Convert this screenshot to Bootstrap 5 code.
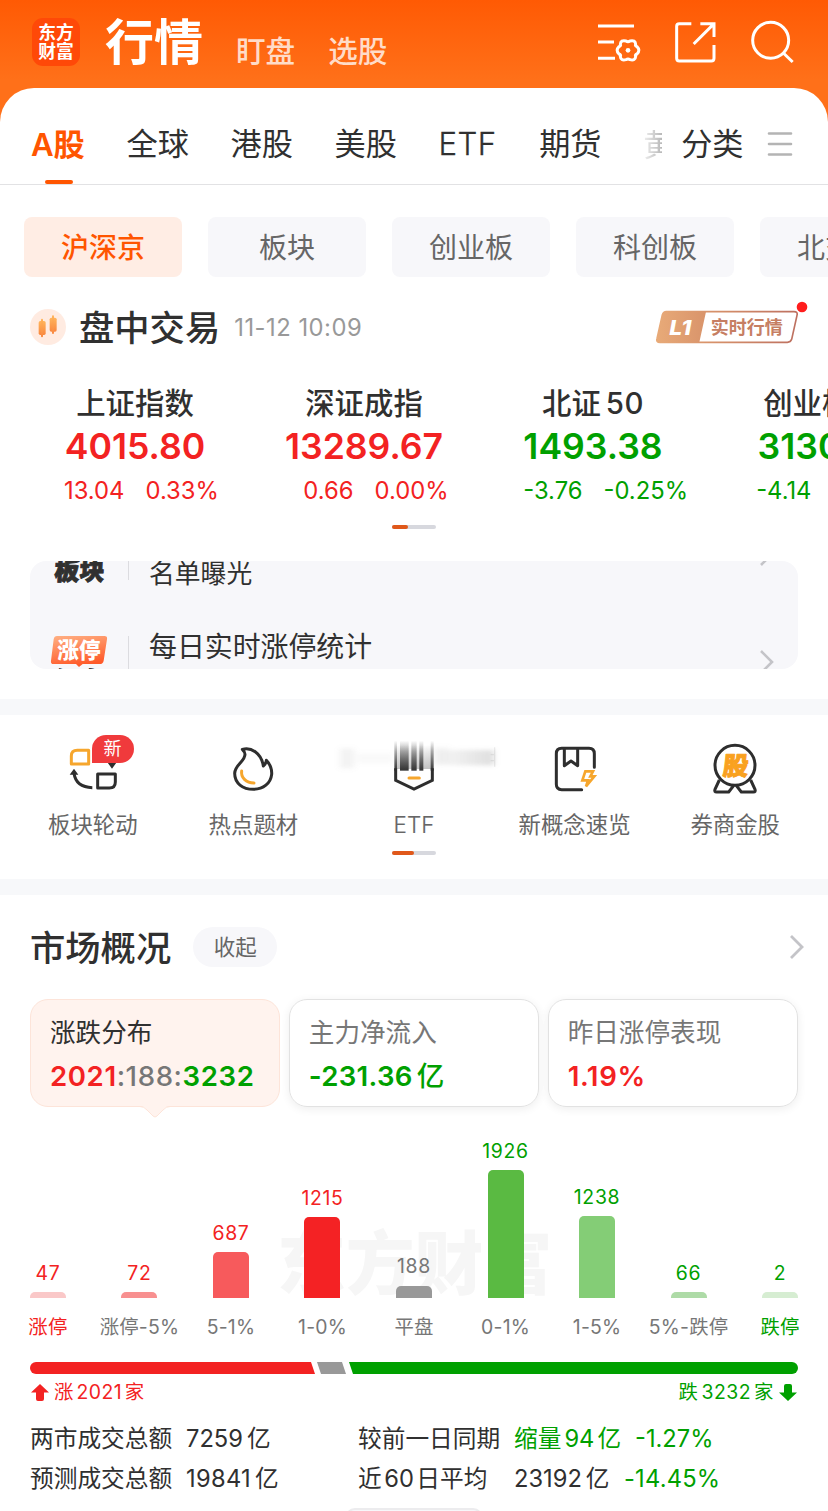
<!DOCTYPE html>
<html lang="zh-CN">
<head>
<meta charset="utf-8">
<meta name="viewport" content="width=device-width, initial-scale=1">
<title>行情</title>
<link href="https://cdn.jsdelivr.net/npm/bootstrap@5.3.0/dist/css/bootstrap.min.css" rel="stylesheet">
<style>
  :root { --up:#f32222; --down:#00a000; --brand:#ff5500; --ink:#303030; --muted2:#666; --soft:#f7f7fa; }
  html, body { height:1511px; overflow:hidden; }
  body { font-family:Inter,"Noto Sans CJK SC",sans-serif; color:var(--ink); background:#fff; line-height:1; white-space:nowrap; }
  svg { display:block; flex:none; overflow:visible; }
  .up { color:var(--up); } .down { color:var(--down); }
  .top-area { height:128px; background:linear-gradient(#ff5a04,#ff7019 80px); }
  .top-row { height:88px; padding:0 30.7px 0 32px; }
  .app-logo { width:48px; height:48px; border-radius:11px; background:#ff4908; color:#fff; font-size:17.8px; line-height:19.5px; font-weight:700; margin-top:-4px; }
  .title-main { font-size:49px; font-weight:700; margin:-4px 0 0 25px; }
  .title-sub { font-size:29.6px; font-weight:500; color:#ffdcc8; margin-top:15px; }
  .top-icons { gap:26.67px; margin-top:-5px; }
  .sheet { margin-top:-40px; border-radius:34px 34px 0 0; background:#fff; }
  .tabs-row { height:97px; border-bottom:1px solid #e2e2e4; padding:18px 35px 0 32px; font-size:31.2px; }
  .tab-list { gap:41.6px; margin-left:-1px; }
  .tab-on { color:var(--brand); font-weight:600; width:54px; position:relative; height:56px; line-height:56px; letter-spacing:-.2px; }
  .tab-on::after { content:""; position:absolute; left:14px; bottom:-11px; width:28px; height:4px; border-radius:2px; background:var(--brand); }
  .tab-etf { width:59px; letter-spacing:.4px; font-weight:300; -webkit-text-stroke:.3px; }
  .tab-peek { width:19px; overflow:hidden; line-height:1.3; background:linear-gradient(90deg,#f0f0f0,#b8b8b8); -webkit-background-clip:text; color:transparent; }
  .pill-row { padding:32px 0 0 24px; gap:26px; overflow:hidden; }
  .pill { flex:none; width:158px; height:60px; padding-top:2px; border-radius:8px; background:var(--soft); color:var(--muted2); font-size:28px; }
  .pill.on { background:#ffede4; color:var(--brand); font-weight:500; }
  .status-row { height:36px; margin:32px 0 0 30px; }
  .h-title { font-size:35.3px; font-weight:500; padding-top:3px; }
  .stamp { font-size:23.8px; letter-spacing:.5px; color:#999; padding-top:1px; }
  .index-row { margin:39px 0 0 20.5px; height:141px; overflow:hidden; }
  .index-cell { flex:none; width:229px; }
  .index-name { font-size:29.4px; line-height:40px; font-weight:500; }
  .index-val { font-size:35.6px; line-height:45px; font-weight:600; }
  .index-chg { font-size:23.8px; line-height:43px; gap:21px; }
  .dash { width:44px; height:4px; border-radius:2px; background:#d7d8de; }
  .dash i { display:block; height:4px; border-radius:2px; background:#e0581a; }
  .ticker { margin:32px 30px 30px; height:108px; border-radius:16px; background:var(--soft); overflow:hidden; }
  .ticker-line { padding:0 24px 0 20px; }
  .tick-tag { width:56px; }
  .tick-rule { width:1px; background:#dcdce0; margin-left:22px; }
  .heavy { font-weight:900; font-size:25px; font-family:"Noto Sans CJK SC",sans-serif; -webkit-text-stroke:.9px; }
  .band { height:16px; background:#f7f8fa; }
  .tool-row { padding:15px 12.5px 0; height:136px; }
  .tool { width:160.6px; font-size:22.4px; color:var(--muted2); }
  .tool-name { line-height:46px; }
  .new-tag { position:absolute; left:79px; top:5px; width:42px; height:28px; border-radius:14px 14px 14px 0; background:#f03a3c; color:#fff; font-size:18px; line-height:28px; }
  .market-head { height:40px; margin:32px 24px 32px 30px; }
  .fold { width:84px; height:40px; padding-top:1px; border-radius:20px; background:var(--soft); color:var(--muted2); font-size:21.5px; margin-left:22px; }
  .stat-cards { padding:0 30px; gap:8.5px; }
  .stat-card { height:108px; border:1px solid #e2e2e2; border-radius:18px; box-shadow:0 2px 10px rgba(0,0,0,.07); padding:16px 0 0 19px; flex:1; position:relative; }
  .stat-card.on { background:#fff3ee; border-color:#fde4d9; box-shadow:none; }
  .stat-name { font-size:25.6px; line-height:34px; color:#777; }
  .stat-card.on .stat-name { color:var(--ink); }
  .stat-num { font-size:27.6px; line-height:34px; margin-top:9px; font-weight:600; letter-spacing:.3px; }
  .stat-num.wide { letter-spacing:.6px; }
  .notch { position:absolute; left:109px; top:105px; }
  .chart { height:191px; padding:0 2.2px; position:relative; }
  .wm { position:absolute; left:277px; top:119px; font-size:68.8px; line-height:76px; font-weight:900; color:#f6f6f6; }
  .col-bar { flex:1; position:relative; font-size:19.4px; letter-spacing:.7px; }
  .bar-fill { width:36px; border-radius:5px 5px 0 0; margin-top:9px; }
  .pct-row { padding:0 2.2px; margin-top:18px; font-size:19.4px; line-height:22px; color:#777; letter-spacing:.2px; }
  .pct-row span { flex:1 1 0; width:0; display:flex; justify-content:center; }
  .split-bar { margin:24px 30px 0; }
  .split-text { margin:0 31px; height:36px; padding-top:1px; font-size:19.4px; letter-spacing:.5px; }
  .sum-table { margin:9px 0 0 30px; font-size:23.7px; line-height:40px; }
  .sum-table > div { height:40px; }
  .more-handle { width:138px; height:20px; border-radius:14px; border:2px solid #ececee; background:#f7f7fa; margin:9px auto 0; }
</style>
</head>
<body>
<header class="top-area">
  <div class="top-row d-flex align-items-center">
    <div class="app-logo d-flex flex-column align-items-center justify-content-center"><span>东方</span><span>财富</span></div>
    <div class="title-main text-white">行情</div>
    <div class="title-sub" style="margin-left:33px">盯盘</div>
    <div class="title-sub" style="margin-left:33px">选股</div>
    <div class="top-icons d-flex ms-auto">
      <svg width="50" height="50" viewBox="540 50 150 150" fill="none" stroke="#fff" stroke-width="9"><path d="M552 77H660M552 125H600M552 174H603"/><path transform="translate(642 150)" stroke-linejoin="round" d="M27-11Q38 0 27 11Q20 14 23 18Q22 32 6 28Q0 24-6 28Q-22 32-23 18Q-20 14-27 11Q-38 0-27-11Q-20-14-23-18Q-22-32-6-28Q0-24 6-28Q22-32 23-18Q20-14 27-11Z"/><circle cx="642" cy="150" r="7" fill="#fff" stroke="none"/></svg>
      <svg width="50" height="50" viewBox="770 50 150 150" fill="none" stroke="#fff" stroke-width="9"><path d="M831 70H795Q787 70 787 78V174Q787 182 795 182H891Q899 182 899 174V134M858 70H899V110M838 131L897 72"/></svg>
      <svg width="50" height="50" viewBox="1000 50 150 150" fill="none" stroke="#fff" stroke-width="9"><circle cx="1071" cy="120" r="54"/><path d="M1109 158L1137 185"/></svg>
    </div>
  </div>
</header>
<main class="sheet">
  <nav class="tabs-row d-flex align-items-center">
    <div class="tab-list d-flex align-items-center">
      <span class="tab-on">A股</span><span>全球</span><span>港股</span><span>美股</span><span class="tab-etf">ETF</span><span>期货</span><span class="tab-peek">黄</span>
    </div>
    <span style="margin-left:19px">分类</span>
    <svg class="ms-auto" style="margin-top:-2px" width="26" height="26" viewBox="0 0 26 26" stroke="#b4b4b4" stroke-width="2.6" stroke-linecap="round"><path d="M2 2.5H24M2 13H24M2 23.5H24"/></svg>
  </nav>

  <div class="pill-row d-flex">
    <div class="pill on d-flex align-items-center justify-content-center">沪深京</div>
    <div class="pill d-flex align-items-center justify-content-center">板块</div>
    <div class="pill d-flex align-items-center justify-content-center">创业板</div>
    <div class="pill d-flex align-items-center justify-content-center">科创板</div>
    <div class="pill d-flex align-items-center justify-content-center">北交所</div>
  </div>

  <div class="status-row d-flex align-items-center">
    <svg width="36" height="36" viewBox="0 0 108 108"><defs><linearGradient id="ca" x2="0" y2="1"><stop stop-color="#ffb55c"/><stop offset="1" stop-color="#f9873f"/></linearGradient></defs><circle cx="54" cy="54" r="54" fill="#ffebe1"/><g fill="url(#ca)"><rect x="26" y="36" width="21" height="42" rx="5"/><rect x="33" y="29" width="6" height="56" rx="3"/><rect x="59" y="26" width="21" height="42" rx="5"/><rect x="66" y="19" width="6" height="56" rx="3"/></g></svg>
    <span class="h-title" style="margin-left:13px">盘中交易</span>
    <span class="stamp" style="margin-left:14px">11-12 10:09</span>
    <svg class="ms-auto" style="margin-right:19px" width="155" height="45" viewBox="720 315 465 135"><defs><linearGradient id="lg" gradientUnits="userSpaceOnUse" x1="728" x2="1150" y1="0" y2="0"><stop stop-color="#e8aa78"/><stop offset=".35" stop-color="#d9946b"/><stop offset="1" stop-color="#bd7060"/></linearGradient></defs>
      <path d="M757 335H876L856 427H738Q726 427 729 416L745 345Q748 335 757 335Z" fill="url(#lg)"/>
      <path d="M757 335H1140Q1152 335 1149 346L1133 418Q1130 427 1120 427H738Q726 427 729 416L745 345Q748 335 757 335Z" fill="none" stroke="url(#lg)" stroke-width="5"/>
      <text x="766" y="404" font-size="62" font-weight="800" font-style="italic" fill="#fff" textLength="66" lengthAdjust="spacingAndGlyphs">L1</text><text x="890" y="401" font-size="54" font-weight="700" fill="#c67e63">实时行情</text><circle cx="1164" cy="321" r="16" fill="#ff1d1d"/></svg>
  </div>

  <div class="index-row d-flex text-center">
    <div class="index-cell"><div class="index-name">上证指数</div><div class="index-val up">4015.80</div><div class="index-chg up d-flex"><span class="w-50 text-end">13.04</span><span class="w-50 text-start">0.33%</span></div></div>
    <div class="index-cell"><div class="index-name">深证成指</div><div class="index-val up">13289.67</div><div class="index-chg up d-flex"><span class="w-50 text-end">0.66</span><span class="w-50 text-start">0.00%</span></div></div>
    <div class="index-cell"><div class="index-name">北证<span style="margin-left:5px;letter-spacing:.5px">50</span></div><div class="index-val down">1493.38</div><div class="index-chg down d-flex"><span class="w-50 text-end">-3.76</span><span class="w-50 text-start">-0.25%</span></div></div>
    <div class="index-cell"><div class="index-name">创业板指</div><div class="index-val down">3130.18</div><div class="index-chg down d-flex"><span class="w-50 text-end">-4.14</span><span class="w-50 text-start">-0.13%</span></div></div>
  </div>
  <div class="dash mx-auto"><i style="width:16px"></i></div>

  <section class="ticker">
    <div class="ticker-line d-flex" style="height:75px">
      <div class="tick-tag text-center heavy" style="line-height:16px;transform:skewX(-3deg)">板块</div>
      <div class="tick-rule" style="height:19px"></div>
      <div style="font-size:25.8px;line-height:25px;margin-left:20px">名单曝光</div>
      <svg class="ms-auto" style="margin-top:-19px" width="14" height="24" viewBox="0 0 14 24" fill="none" stroke="#c4c4c8" stroke-width="2.6"><path d="M1 1L12 12L1 23"/></svg>
    </div>
    <div class="ticker-line d-flex">
      <div class="tick-tag"><svg style="margin-left:1px" width="56" height="31" viewBox="0 0 168 93"><defs><linearGradient id="tg" x2=".3" y2="1"><stop stop-color="#ffb184"/><stop offset="1" stop-color="#ff5a2a"/></linearGradient></defs><path d="M18 0H160Q170 0 168 10L158 74Q156 84 146 84H95L84 93L75 84H8Q-2 84 0 74L8 10Q10 0 18 0Z" fill="url(#tg)"/><text x="19" y="66" font-size="65" font-weight="900" fill="#fff">涨停</text></svg><div class="heavy text-center" style="line-height:25px;transform:skewX(-3deg)">复盘</div></div>
      <div class="tick-rule" style="height:40px"></div>
      <div style="font-size:27.9px;line-height:23px;margin-left:20px">每日实时涨停统计</div>
      <svg class="ms-auto" style="margin-top:14px" width="14" height="24" viewBox="0 0 14 24" fill="none" stroke="#c4c4c8" stroke-width="2.6"><path d="M1 1L12 12L1 23"/></svg>
    </div>
  </section>
  <div class="band"></div>

  <section class="tool-row d-flex text-center">
    <div class="tool position-relative">
      <svg class="mx-auto" width="72" height="72" viewBox="171 30 216 216" fill="none" stroke="#2e2e2e" stroke-width="9" stroke-linejoin="round"><path stroke="#f6a62d" d="M214 132V108Q214 91 232 91H266V132Z"/><path d="M293 162H346V186Q346 204 328 204H293ZM222 160Q228 202 277 203"/><path fill="#2e2e2e" stroke="none" d="M209 164L222 146L235 164ZM323 128H349L336 146Z"/></svg>
      <div class="new-tag">新</div>
      <div class="tool-name">板块轮动</div></div>
    <div class="tool"><svg class="mx-auto" width="72" height="72" viewBox="651 30 216 216" fill="none" stroke="#2e2e2e" stroke-width="9" stroke-linejoin="round" stroke-linecap="round"><path d="M727 88C752 80 784 98 790 138C796 134 798 129 799 121C812 135 816 150 815 163C812 190 790 208 760 208C728 208 704 190 704 160C705 134 735 125 735 103C735 97 731 92 727 88Z"/><path stroke="#f6a62d" d="M725 153C722 172 738 189 762 189"/></svg><div class="tool-name">热点题材</div></div>
    <div class="tool"><svg class="mx-auto" width="72" height="72" viewBox="1134 30 216 216"><defs><linearGradient id="sm" x2="0" y2="1"><stop stop-color="#333" stop-opacity="0"/><stop offset=".35" stop-color="#333" stop-opacity=".4"/><stop offset="1" stop-color="#333"/></linearGradient><linearGradient id="sf"><stop stop-color="#999" stop-opacity=".05"/><stop offset="1" stop-color="#999" stop-opacity=".32"/></linearGradient><filter id="bl" x="-20%" y="-50%" width="140%" height="200%"><feGaussianBlur stdDeviation="9 7"/></filter></defs>
      <g filter="url(#bl)"><rect x="1020" y="85" width="42" height="60" fill="#999" opacity=".12"/><rect x="1070" y="100" width="110" height="30" fill="#999" opacity=".06"/><rect x="1300" y="90" width="182" height="46" fill="url(#sf)"/><rect x="1296" y="80" width="50" height="52" fill="#999" opacity=".08"/></g>
      <path d="M1484 82V140M1472 104H1484M1472 122H1484" stroke="#999" stroke-width="4" opacity=".18"/>
      <rect x="1190" y="75" width="104" height="72" fill="url(#sm)" opacity=".3"/>
      <g fill="url(#sm)"><rect x="1183" y="62" width="8" height="90"/><rect x="1200" y="62" width="26" height="90"/><rect x="1234" y="62" width="16" height="90"/><rect x="1258" y="62" width="12" height="90"/><rect x="1292" y="62" width="9" height="90"/></g>
      <path d="M1187 145V181L1242 207L1297 181V145" fill="none" stroke="#2e2e2e" stroke-width="9"/><path d="M1227 174H1258" stroke="#f6a62d" stroke-width="9" stroke-linecap="round"/></svg><div class="tool-name" style="font-weight:300;-webkit-text-stroke:.2px">ETF</div></div>
    <div class="tool"><svg class="mx-auto" width="72" height="72" viewBox="375 30 216 216" fill="none" stroke="#2e2e2e" stroke-width="9" stroke-linejoin="round" stroke-linecap="round"><path d="M503 209H443Q427 209 427 193V101Q427 85 443 85H525Q541 85 541 101V142M451 85V137L471 123L491 137V85"/><path stroke="#f6a62d" stroke-width="8" stroke-linejoin="miter" d="M514 154H537L529 169H541L516 199L522 181H505Z"/></svg><div class="tool-name">新概念速览</div></div>
    <div class="tool"><svg class="mx-auto" width="72" height="72" viewBox="855 30 216 216" fill="none" stroke="#2e2e2e" stroke-width="9" stroke-linejoin="round"><circle cx="963" cy="136" r="60"/><path d="M916 180L903 208Q900 216 908 216H944L959 197M1010 180L1023 208Q1026 216 1018 216H982L967 197"/><text transform="translate(963 166) skewX(-6)" text-anchor="middle" font-size="76" font-weight="900" fill="#f9a11f" stroke="#f9a11f" stroke-width="3">股</text></svg><div class="tool-name">券商金股</div></div>
  </section>
  <div class="dash mx-auto"><i style="width:22px"></i></div>
  <div class="band" style="margin-top:24px"></div>

  <section>
    <div class="market-head d-flex align-items-center">
      <span class="h-title">市场概况</span><span class="fold d-flex align-items-center justify-content-center">收起</span>
      <svg class="ms-auto" width="14" height="24" viewBox="0 0 14 24" fill="none" stroke="#c4c4c8" stroke-width="2.8"><path d="M1 1L12 12L1 23"/></svg>
    </div>
    <div class="stat-cards d-flex">
      <div class="stat-card on"><div class="stat-name">涨跌分布</div><div class="stat-num wide"><span class="up">2021</span><span style="color:#777;font-weight:500">:188:</span><span class="down">3232</span></div>
        <svg class="notch" width="30" height="14" viewBox="0 0 30 14"><path d="M0 1Q4 1 7 5L13 11Q15 13 17 11L23 5Q26 1 30 1V0H0Z" fill="#fff3ee"/><path d="M0 1.5Q4 1.5 7 5L13 11Q15 13 17 11L23 5Q26 1.5 30 1.5" fill="none" stroke="#fde4d9"/></svg></div>
      <div class="stat-card"><div class="stat-name">主力净流入</div><div class="stat-num down">-231.36<span style="font-weight:500;margin-left:4px">亿</span></div></div>
      <div class="stat-card"><div class="stat-name">昨日涨停表现</div><div class="stat-num wide up">1.19%</div></div>
    </div>
    <div class="chart d-flex">
      <div class="wm">东方财富</div>
      <div class="col-bar d-flex flex-column align-items-center justify-content-end up">47<div class="bar-fill" style="height:6px;background:#fac8c8"></div></div>
      <div class="col-bar d-flex flex-column align-items-center justify-content-end up">72<div class="bar-fill" style="height:6px;background:#f89090"></div></div>
      <div class="col-bar d-flex flex-column align-items-center justify-content-end up">687<div class="bar-fill" style="height:46px;background:#f75a5c"></div></div>
      <div class="col-bar d-flex flex-column align-items-center justify-content-end up">1215<div class="bar-fill" style="height:81px;background:#f42224"></div></div>
      <div class="col-bar d-flex flex-column align-items-center justify-content-end" style="color:#777">188<div class="bar-fill" style="height:12.5px;background:#999"></div></div>
      <div class="col-bar d-flex flex-column align-items-center justify-content-end down">1926<div class="bar-fill" style="height:128px;background:#5aba42"></div></div>
      <div class="col-bar d-flex flex-column align-items-center justify-content-end down">1238<div class="bar-fill" style="height:82px;background:#84cd76"></div></div>
      <div class="col-bar d-flex flex-column align-items-center justify-content-end down">66<div class="bar-fill" style="height:6px;background:#aedba7"></div></div>
      <div class="col-bar d-flex flex-column align-items-center justify-content-end down">2<div class="bar-fill" style="height:6px;background:#d6edd2"></div></div>
    </div>
    <div class="pct-row d-flex"><span class="up">涨停</span><span>涨停-5%</span><span>5-1%</span><span>1-0%</span><span>平盘</span><span>0-1%</span><span>1-5%</span><span>5%-跌停</span><span class="down">跌停</span></div>
    <div class="split-bar"><svg width="768" height="12" viewBox="0 0 768 12"><path fill="#f32222" d="M6 0H281L285 12H6A6 6 0 0 1 6 0Z"/><path fill="#999" d="M287 0H312L316 12H291Z"/><path fill="#00a000" d="M319 0H762A6 6 0 0 1 762 12H323Z"/></svg></div>
    <div class="split-text d-flex align-items-center">
      <svg width="18" height="17" viewBox="0 0 18 17"><path fill="#f32222" d="M9 0L18 8.5H13V15Q13 17 11 17H7Q5 17 5 15V8.5H0Z"/></svg>
      <span class="up" style="margin-left:5px">涨<span style="margin:0 2.5px">2021</span>家</span>
      <span class="down ms-auto" style="margin-right:5px">跌<span style="margin:0 3px">3232</span>家</span>
      <svg width="18" height="17" viewBox="0 0 18 17"><path fill="#00a000" d="M9 17L18 8.5H13V2Q13 0 11 0H7Q5 0 5 2V8.5H0Z"/></svg>
    </div>
    <div class="sum-table">
      <div class="d-flex"><span style="width:156px">两市成交总额</span><span style="width:172px">7259<span style="margin-left:4px">亿</span></span><span style="width:156px">较前一日同期</span><span class="down" style="width:121px">缩量<span style="margin:0 3px">94</span>亿</span><span class="down">-1.27%</span></div>
      <div class="d-flex"><span style="width:156px">预测成交总额</span><span style="width:172px"><span style="letter-spacing:.3px">19841</span><span style="margin-left:4px">亿</span></span><span style="width:156px">近<span style="margin:0 2.5px">60</span>日平均</span><span style="width:110px">23192<span style="margin-left:4px">亿</span></span><span class="down" style="letter-spacing:.2px">-14.45%</span></div>
    </div>
    <div class="more-handle"></div>
  </section>
</main>
<script src="https://cdn.jsdelivr.net/npm/bootstrap@5.3.0/dist/js/bootstrap.bundle.min.js"></script>
</body>
</html>
